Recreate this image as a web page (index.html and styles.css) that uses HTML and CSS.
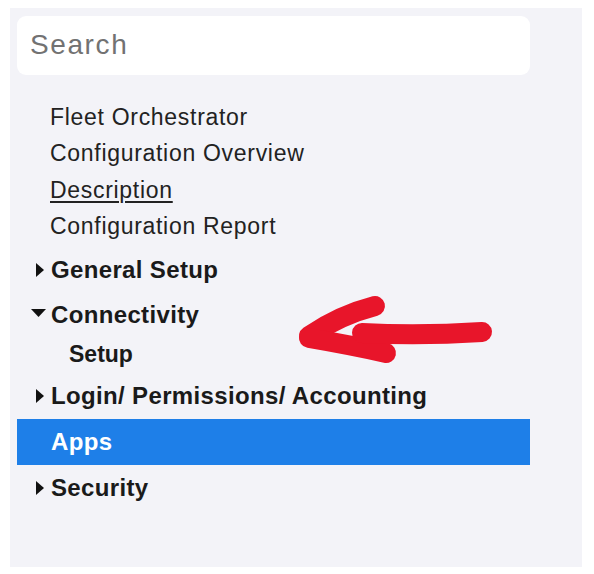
FILE: index.html
```html
<!DOCTYPE html>
<html>
<head>
<meta charset="utf-8">
<link rel="stylesheet" href="styles.css">
</head>
<body>
<div class="sidebar">
  <input class="search" type="text" placeholder="Search">
  <div class="nav">
    <div class="item">Fleet Orchestrator</div>
    <div class="item">Configuration Overview</div>
    <div class="item"><span class="link">Description</span></div>
    <div class="item">Configuration Report</div>
    <div class="group first">
      <span class="caret"><svg class="tri-r" width="8" height="14" viewBox="0 0 8 14"><path d="M0 0L8 7L0 14Z" fill="#111"/></svg></span>General Setup
    </div>
    <div class="group open">
      <span class="caret"><svg class="tri-d" width="15" height="8" viewBox="0 0 15 8"><path d="M0 0H15L7.5 8Z" fill="#111"/></svg></span>Connectivity
    </div>
    <div class="subitem">Setup</div>
    <div class="group">
      <span class="caret"><svg class="tri-r" width="8" height="14" viewBox="0 0 8 14"><path d="M0 0L8 7L0 14Z" fill="#111"/></svg></span>Login/ Permissions/ Accounting
    </div>
    <div class="group active">
      <span class="caret"></span>Apps
    </div>
    <div class="group">
      <span class="caret"><svg class="tri-r" width="8" height="14" viewBox="0 0 8 14"><path d="M0 0L8 7L0 14Z" fill="#111"/></svg></span>Security
    </div>
  </div>
  <svg class="arrow" width="220" height="80" viewBox="290 290 220 80">
    <g fill="none" stroke="#e8152a" stroke-width="20" stroke-linecap="round" stroke-linejoin="round">
      <path d="M375 306 Q340 315 309 336"/>
      <path d="M309 338 Q350 345 386 353"/>
      <path d="M362 333 Q420 336 482 332"/>
    </g>
  </svg>
</div>
</body>
</html>
```
FILE: styles.css
```css
html, body {
  margin: 0;
  padding: 0;
  background: #ffffff;
}

.sidebar {
  position: relative;
  box-sizing: border-box;
  width: 572px;
  height: 559px;
  margin: 8px 0 0 10px;
  padding: 8px 52px 0 7px;
  background: #f3f3f8;
  font-family: "Liberation Sans", Arial, sans-serif;
  color: #1e1e1e;
}

.search {
  display: block;
  box-sizing: border-box;
  width: 513px;
  height: 59px;
  border: none;
  outline: none;
  border-radius: 9px;
  background: #ffffff;
  padding: 0 0 2px 13px;
  font-family: "Liberation Sans", Arial, sans-serif;
  font-size: 28px;
  letter-spacing: 1.6px;
  color: #333;
}

.search::placeholder {
  color: #727272;
}

.nav {
  margin-top: 24px;
  display: flex;
  flex-direction: column;
}

.item {
  height: 36.5px;
  display: flex;
  align-items: center;
  padding-left: 33px;
  font-size: 23px;
  letter-spacing: 0.7px;
  color: #222;
}

.link {
  text-decoration: underline;
  text-underline-offset: 3px;
}

.group {
  height: 46px;
  display: flex;
  align-items: center;
  padding-left: 17px;
  font-size: 24px;
  font-weight: bold;
  letter-spacing: 0.35px;
  color: #1a1a1a;
}

.group.first {
  height: 50px;
}

.group.open {
  height: 40px;
}

.caret {
  width: 17px;
  height: 14px;
  flex: none;
  display: flex;
  align-items: center;
}

.tri-r {
  margin-left: 2px;
}

.tri-d {
  margin-left: -3px;
  margin-top: -5px;
}

.subitem {
  height: 38px;
  display: flex;
  align-items: center;
  padding-left: 52px;
  font-size: 23px;
  font-weight: bold;
  letter-spacing: 0;
  color: #1a1a1a;
}

.group.active {
  background: #1e7fe8;
  color: #ffffff;
}

.arrow {
  position: absolute;
  left: 280px;
  top: 282px;
}
```
